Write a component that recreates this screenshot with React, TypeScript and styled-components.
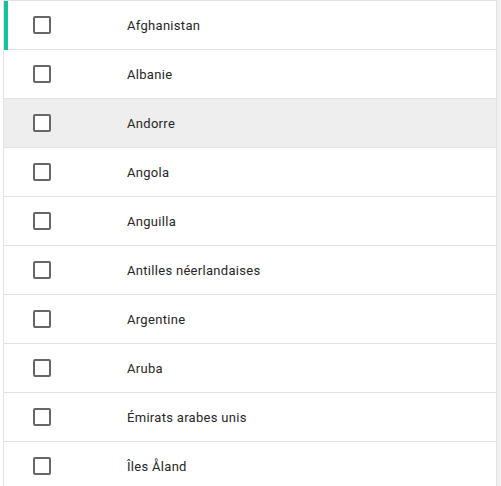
import React from "react";
import styled, { createGlobalStyle } from "styled-components";

const Global = createGlobalStyle`
  html, body { margin: 0; padding: 0; background: #ffffff; }
  body { font-family: Roboto, "Noto Sans", Arial, sans-serif; overflow: hidden; }
`;

const Page = styled.div`
  display: flex;
  height: 486px;
  padding-left: 3px;
`;

const List = styled.div`
  width: 494px;
  box-sizing: border-box;
  border: 1px solid #e2e2e2;
  border-bottom: none;
  position: relative;
  overflow: hidden;
`;

const Gutter = styled.div`
  flex: 1;
  background: #f1f1f1;
`;

const Row = styled.div<{ $hover?: boolean }>`
  position: relative;
  display: flex;
  align-items: center;
  height: 48px;
  border-bottom: 1px solid #e2e2e2;
  background: ${(p) => (p.$hover ? "#eeeeee" : "#ffffff")};
`;

const ActiveBar = styled.span`
  position: absolute;
  left: -1px;
  top: -1px;
  bottom: -1px;
  width: 5px;
  background: #16c29e;
`;

const CheckCell = styled.div`
  width: 123px;
  padding-left: 29px;
  box-sizing: border-box;
  display: flex;
  align-items: center;
`;

const Box = styled.span`
  width: 18px;
  height: 18px;
  box-sizing: border-box;
  border: 2px solid #666666;
  border-radius: 2px;
  background: #ffffff;
`;

const Label = styled.span`
  font-size: 13px;
  color: #262626;
  letter-spacing: 0.3px;
`;

const countries = [
  "Afghanistan",
  "Albanie",
  "Andorre",
  "Angola",
  "Anguilla",
  "Antilles néerlandaises",
  "Argentine",
  "Aruba",
  "Émirats arabes unis",
  "Îles Åland",
];

export default function App() {
  return (
    <>
      <Global />
      <Page>
        <List>
          {countries.map((c, i) => (
            <Row key={c} $hover={i === 2}>
              {i === 0 && <ActiveBar />}
              <CheckCell>
                <Box />
              </CheckCell>
              <Label>{c}</Label>
            </Row>
          ))}
        </List>
        <Gutter />
      </Page>
    </>
  );
}
